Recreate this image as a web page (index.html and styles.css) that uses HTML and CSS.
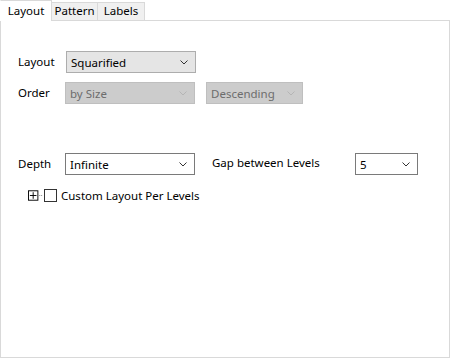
FILE: index.html
```html
<!DOCTYPE html>
<html lang="en">
<head>
    <meta charset="UTF-8">
    <title>Treemap Layout</title>
    <link rel="stylesheet" href="styles.css">
</head>
<body>
    <div class="tabs">
        <div class="tab active">Layout</div>
        <div class="tab pattern">Pattern</div>
        <div class="tab labels">Labels</div>
    </div>

    <div class="panel">
        <!-- Layout -->
        <div class="row first">
            <span class="label">Layout</span>
            <div class="combo grey wide">
                <span>Squarified</span>
                <svg width="8" height="5" viewBox="0 0 8 5"><path d="M0.5 0.5 L4 4 L7.5 0.5" fill="none" stroke="#333" stroke-width="1"/></svg>
            </div>
        </div>
        <!-- Order -->
        <div class="row second">
            <span class="label">Order</span>
            <div class="combo disabled wide">
                <span>by Size</span>
                <svg width="8" height="5" viewBox="0 0 8 5"><path d="M0.5 0.5 L4 4 L7.5 0.5" fill="none" stroke="#b5b5b5" stroke-width="1"/></svg>
            </div>
            <div class="combo disabled mid">
                <span>Descending</span>
                <svg width="8" height="5" viewBox="0 0 8 5"><path d="M0.5 0.5 L4 4 L7.5 0.5" fill="none" stroke="#b5b5b5" stroke-width="1"/></svg>
            </div>
        </div>
        <!-- Depth -->
        <div class="row third">
            <span class="label">Depth</span>
            <div class="combo wide">
                <span>Infinite</span>
                <svg width="8" height="5" viewBox="0 0 8 5"><path d="M0.5 0.5 L4 4 L7.5 0.5" fill="none" stroke="#333" stroke-width="1"/></svg>
            </div>
            <span class="gap-label">Gap between Levels</span>
            <div class="combo small">
                <span>5</span>
                <svg width="8" height="5" viewBox="0 0 8 5"><path d="M0.5 0.5 L4 4 L7.5 0.5" fill="none" stroke="#333" stroke-width="1"/></svg>
            </div>
        </div>
        <!-- Custom layout -->
        <div class="tree-row">
            <svg class="expander" width="17" height="11" viewBox="0 0 17 11">
                <rect x="0.5" y="0.5" width="10" height="10" fill="#fff" stroke="#000"/>
                <path d="M2 5.5 H9 M5.5 2 V9" stroke="#000"/>
                <path d="M12 5.5 H13 M14 5.5 H15" stroke="#808080"/>
            </svg>
            <span class="checkbox"></span>
            <span class="check-label">Custom Layout Per Levels</span>
        </div>
    </div>
</body>
</html>
```

FILE: styles.css
```css
body {
    margin: 0;
    padding: 0;
    background: #fff;
    font-family: "Noto Sans", sans-serif;
    font-size: 11.5px;
    color: #000;
}
/* Tabs */
.tabs {
    display: flex;
    height: 20px;
    align-items: flex-end;
    position: relative;
    z-index: 1;
}
.tab {
    box-sizing: border-box;
    height: 18px;
    line-height: 16px;
    text-align: center;
    background: #f0f0f0;
    border: 1px solid #d9d9d9;
    border-bottom: none;
    margin-left: -1px;
}
.tab.active {
    width: 52px;
    height: 21px;
    margin-bottom: -1px;
    margin-left: 0;
    background: #fff;
    line-height: 19px;
    border-left-color: #fff;
}
.tab.pattern { width: 47px; }
.tab.labels { width: 48px; }
/* Panel */
.panel {
    box-sizing: border-box;
    width: 450px;
    height: 338px;
    border: 1px solid #d9d9d9;
    padding: 30px 0 0 17px;
}
.row {
    display: flex;
    align-items: center;
    height: 22px;
}
.row.first { margin-bottom: 9px; }
.row.second { margin-bottom: 49px; }
.row.third { margin-bottom: 13px; }
.label {
    width: 47px;
    padding-bottom: 2px;
}
.first .label { width: 48px; }
.combo {
    box-sizing: border-box;
    height: 22px;
    display: flex;
    align-items: center;
    justify-content: space-between;
    padding: 0 7px 0 4px;
    border: 1px solid #7a7a7a;
    background: #fff;
}
.combo.grey {
    background: #e5e5e5;
    border-color: #adadad;
}
.combo.disabled {
    background: #cccccc;
    border-color: #bfbfbf;
    color: #6d6d6d;
}
.wide { width: 130px; }
.mid { width: 97px; margin-left: 11px; }
.small { width: 63px; }
.gap-label {
    margin-left: 17px;
    width: 143px;
    padding-bottom: 3px;
}
/* Tree row with checkbox */
.tree-row {
    display: flex;
    align-items: center;
    padding-left: 10px;
    height: 14px;
}
.expander { width: 16px; }
.checkbox {
    box-sizing: border-box;
    width: 13px;
    height: 13px;
    border: 1px solid #333;
    background: #fff;
}
.check-label {
    margin-left: 4px;
}
```
